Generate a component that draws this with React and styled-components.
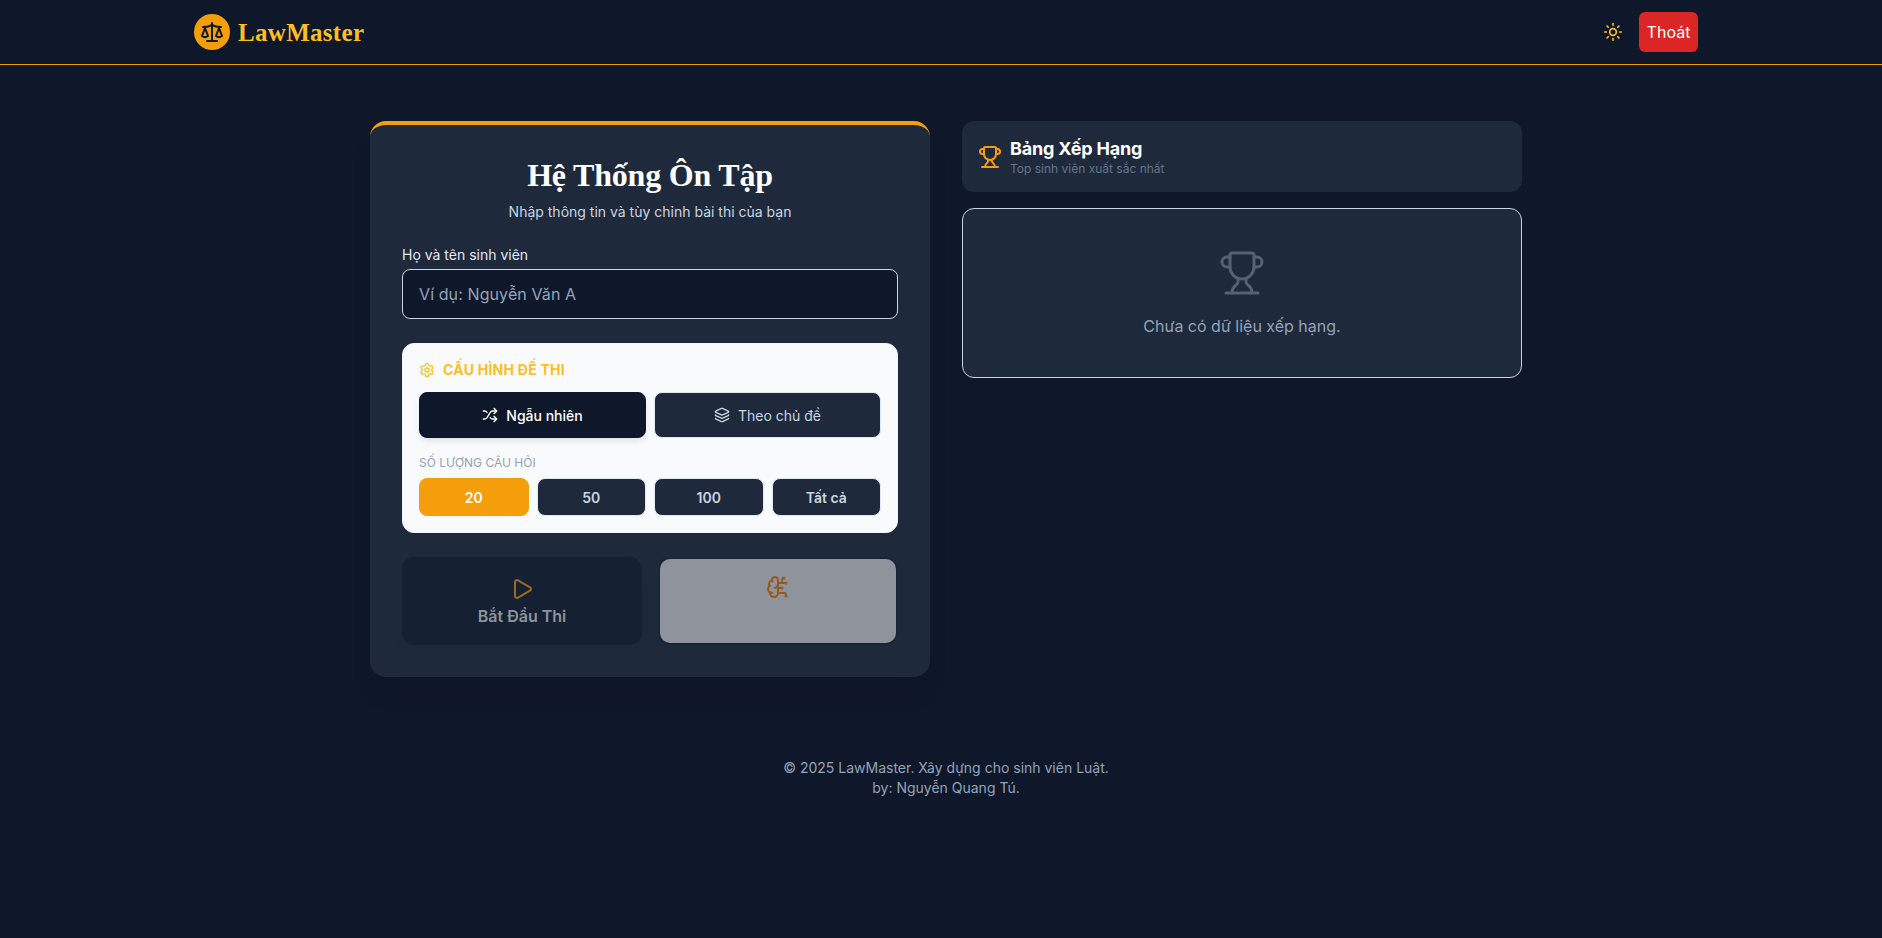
import React from "react"
import styled, { createGlobalStyle } from "styled-components"
import { Scale, Sun, Settings, Shuffle, Layers, Play, BrainCircuit, Trophy } from "lucide-react"

const GlobalStyle = createGlobalStyle`
html, body {
    margin: 0;
    padding: 0;
    background: #0f172a;
    font-family: Inter, "Noto Sans", sans-serif;
}
* {
    box-sizing: border-box;
}
`

const QUESTION_COUNTS = ["20", "50", "100", "Tất cả"]

const App = () => {
    return (
        <StyledPage>
            <GlobalStyle />
            <StyledHeader>
                <StyledHeaderInner>
                    <StyledBrand>
                        <StyledLogo><Scale size={24} strokeWidth={2} /></StyledLogo>
                        <StyledBrandName>LawMaster</StyledBrandName>
                    </StyledBrand>
                    <StyledHeaderActions>
                        <StyledThemeButton><Sun size={20} /></StyledThemeButton>
                        <StyledLogoutButton>Thoát</StyledLogoutButton>
                    </StyledHeaderActions>
                </StyledHeaderInner>
            </StyledHeader>

            <StyledMain>
                <StyledFormCard>
                    <StyledTitle>Hệ Thống Ôn Tập</StyledTitle>
                    <StyledSubtitle>Nhập thông tin và tùy chỉnh bài thi của bạn</StyledSubtitle>

                    <StyledLabel htmlFor="name">Họ và tên sinh viên</StyledLabel>
                    <StyledInput id="name" placeholder="Ví dụ: Nguyễn Văn A" />

                    <StyledConfigPanel>
                        <StyledConfigTitle><Settings size={16} />CẤU HÌNH ĐỀ THI</StyledConfigTitle>
                        <StyledModeRow>
                            <StyledModeButton $active><Shuffle size={16} />Ngẫu nhiên</StyledModeButton>
                            <StyledModeButton><Layers size={16} />Theo chủ đề</StyledModeButton>
                        </StyledModeRow>
                        <StyledCountLabel>SỐ LƯỢNG CÂU HỎI</StyledCountLabel>
                        <StyledCountRow>
                            {QUESTION_COUNTS.map((count, i) => (
                                <StyledCountButton key={count} $active={i === 0}>{count}</StyledCountButton>
                            ))}
                        </StyledCountRow>
                    </StyledConfigPanel>

                    <StyledActionRow>
                        <StyledStartButton disabled><Play size={24} />Bắt Đầu Thi</StyledStartButton>
                        <StyledAiButton disabled><BrainCircuit size={24} /></StyledAiButton>
                    </StyledActionRow>
                </StyledFormCard>

                <StyledSideColumn>
                    <StyledRankHeader>
                        <Trophy size={24} />
                        <div>
                            <StyledRankTitle>Bảng Xếp Hạng</StyledRankTitle>
                            <StyledRankSubtitle>Top sinh viên xuất sắc nhất</StyledRankSubtitle>
                        </div>
                    </StyledRankHeader>
                    <StyledEmptyCard>
                        <Trophy size={48} strokeWidth={1.5} />
                        <StyledEmptyText>Chưa có dữ liệu xếp hạng.</StyledEmptyText>
                    </StyledEmptyCard>
                </StyledSideColumn>
            </StyledMain>

            <StyledFooter>
                <p>© 2025 LawMaster. Xây dựng cho sinh viên Luật.</p>
                <p>by: Nguyễn Quang Tú.</p>
            </StyledFooter>
        </StyledPage>
    )
}

const StyledPage = styled.div`
min-height: 100vh;
background: #0f172a;
color: #fff;
`

const StyledHeader = styled.header`
height: 65px;
border-bottom: 1px solid #f59e0b;
padding-left: 10px;
`

const StyledHeaderInner = styled.div`
width: 1504px;
height: 64px;
margin: 0 auto;
display: flex;
align-items: center;
justify-content: space-between;
`

const StyledBrand = styled.div`
display: flex;
align-items: center;
gap: 8px;
`

const StyledLogo = styled.div`
width: 36px;
height: 36px;
border-radius: 50%;
background: #f59e0b;
color: #0f172a;
display: flex;
align-items: center;
justify-content: center;
`

const StyledBrandName = styled.span`
margin-top: 2px;
font: bold 25px "Liberation Serif", serif;
color: #fbbf24;
letter-spacing: 0.3px;
`

const StyledHeaderActions = styled.div`
display: flex;
align-items: center;
gap: 16px;
`

const StyledThemeButton = styled.button`
width: 20px;
height: 20px;
padding: 0;
border: none;
background: none;
color: #fbbf24;
display: flex;
`

const StyledLogoutButton = styled.button`
height: 40px;
width: 59px;
padding: 0;
border: none;
border-radius: 6px;
background: #dc2626;
color: #fff;
font: 16px Inter, sans-serif;
`

const StyledMain = styled.main`
width: 1152px;
margin: 56px auto 0;
position: relative;
left: 5px;
display: grid;
grid-template-columns: 560px 560px;
gap: 32px;
align-items: start;
`

const StyledFormCard = styled.section`
height: 556px;
padding: 30px 32px 32px;
background: #1e293b;
border-top: 4px solid #f59e0b;
border-radius: 16px;
box-shadow: 0 20px 25px -5px rgba(0, 0, 0, 0.1);
`

const StyledTitle = styled.h1`
margin: 0;
text-align: center;
font: bold 32px/40px "Liberation Serif", serif;
letter-spacing: -0.2px;
color: #fff;
`

const StyledSubtitle = styled.p`
margin: 7px 0 0;
text-align: center;
font-size: 14px;
line-height: 20px;
color: #cbd5e1;
`

const StyledLabel = styled.label`
display: block;
margin: 23px 0 4px;
font-size: 14px;
line-height: 20px;
font-weight: 400;
color: #e2e8f0;
`

const StyledInput = styled.input`
display: block;
width: 100%;
height: 50px;
padding: 0 16px;
background: #0f172a;
border: 1px solid #cbd5e1;
border-radius: 8px;
color: #fff;
font: 16px Inter, sans-serif;
letter-spacing: 0.1px;
&::placeholder {
    color: #94a3b8;
}
`

const StyledConfigPanel = styled.div`
margin-top: 24px;
padding: 16px;
background: #f8fafc;
border: 1px solid #f1f5f9;
border-radius: 12px;
`

const StyledConfigTitle = styled.h3`
margin: 0 0 12px;
display: flex;
align-items: center;
gap: 8px;
font-size: 14px;
line-height: 20px;
font-weight: 700;
letter-spacing: 0.25px;
color: #fbbf24;
`

const StyledModeRow = styled.div`
display: grid;
grid-template-columns: 1fr 1fr;
gap: 8px;
`

const StyledModeButton = styled.button`
height: 46px;
display: flex;
align-items: center;
justify-content: center;
gap: 8px;
border: 1px solid ${props => (props.$active ? "#0f172a" : "#e2e8f0")};
border-radius: 8px;
background: ${props => (props.$active ? "#0f172a" : "#1e293b")};
color: ${props => (props.$active ? "#fff" : "#cbd5e1")};
box-shadow: ${props => (props.$active ? "0 4px 6px -1px rgba(0, 0, 0, 0.1)" : "none")};
font: ${props => (props.$active ? 500 : 400)} 14px Inter, sans-serif;
`

const StyledCountLabel = styled.p`
margin: 17px 0 7px;
font-size: 12px;
line-height: 16px;
font-weight: 400;
color: #94a3b8;
`

const StyledCountRow = styled.div`
display: grid;
grid-template-columns: repeat(4, 1fr);
gap: 8px;
`

const StyledCountButton = styled.button`
height: 38px;
border: 1px solid ${props => (props.$active ? "#f59e0b" : "#e2e8f0")};
border-radius: 8px;
background: ${props => (props.$active ? "#f59e0b" : "#1e293b")};
color: ${props => (props.$active ? "#fff" : "#cbd5e1")};
font: 600 14px Inter, sans-serif;
`

const StyledActionRow = styled.div`
margin-top: 24px;
display: grid;
grid-template-columns: 1fr 1fr;
gap: 16px;
`

const StyledStartButton = styled.button`
height: 88px;
display: flex;
flex-direction: column;
align-items: center;
justify-content: center;
gap: 5px;
border: none;
border-radius: 12px;
background: #162033;
color: #8e939d;
font: 600 16px Inter, sans-serif;
box-shadow: 0 10px 15px -3px rgba(0, 0, 0, 0.03);
svg {
    color: #9a6b1c;
}
`

const StyledAiButton = styled.button`
height: 88px;
padding: 16px 0 0;
display: flex;
justify-content: center;
align-items: flex-start;
border: 2px solid #1a2438;
border-radius: 12px;
background: #8f939b;
color: #955a20;
`

const StyledSideColumn = styled.aside`
display: flex;
flex-direction: column;
gap: 16px;
`

const StyledRankHeader = styled.div`
height: 71px;
padding: 0 16px;
display: flex;
align-items: center;
gap: 8px;
background: #1e293b;
border-radius: 12px;
color: #f59e0b;
`

const StyledRankTitle = styled.h2`
margin: 0;
font-size: 18px;
line-height: 24px;
font-weight: 700;
letter-spacing: -0.2px;
color: #fff;
`

const StyledRankSubtitle = styled.p`
margin: 0;
font-size: 12px;
line-height: 16px;
color: #64748b;
`

const StyledEmptyCard = styled.div`
height: 170px;
display: flex;
flex-direction: column;
align-items: center;
padding-top: 40px;
background: #1e293b;
border: 1px solid #cbd5e1;
border-radius: 12px;
color: #556274;
`

const StyledEmptyText = styled.p`
margin: 17px 0 0;
font-size: 16px;
line-height: 24px;
color: #94a3b8;
`

const StyledFooter = styled.footer`
margin-top: 81px;
padding-left: 10px;
text-align: center;
font-size: 14px;
line-height: 20px;
color: #94a3b8;
p {
    margin: 0;
}
`

export default App
